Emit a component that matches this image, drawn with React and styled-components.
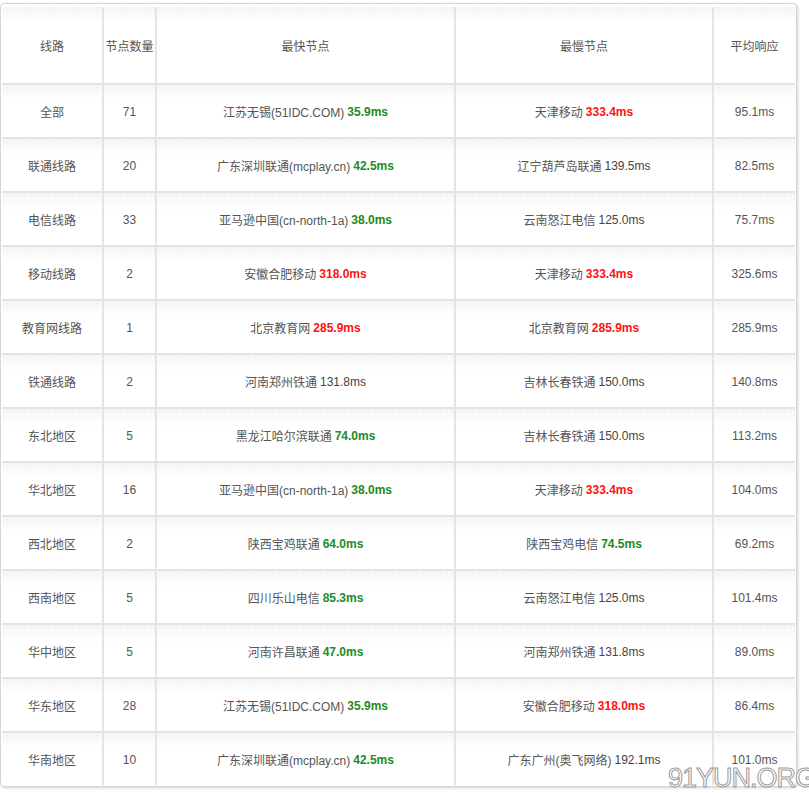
import React from 'react'
import styled, { createGlobalStyle } from 'styled-components'

const GlobalStyle = createGlobalStyle`
  body {
    margin: 0;
    background: #fff;
    font-family: "Liberation Sans", Arial, "Noto Sans CJK SC", sans-serif;
  }
`

const Page = styled.div`
  position: relative;
  width: 809px;
  height: 793px;
  overflow: hidden;
  padding-top: 3px;
  box-sizing: border-box;
`

const Frame = styled.div`
  width: 797px;
  box-sizing: border-box;
  border: 1px solid #d6d6d6;
  border-radius: 4px;
  box-shadow: 1px 1px 3px rgba(0, 0, 0, 0.18);
  padding: 3px 1px 1px 1px;
  background: #fff;
`

const Grid = styled.div`
  display: grid;
  grid-template-columns: 100px 51px 297px 256px 81px;
  grid-template-rows: 76px;
  grid-auto-rows: 52px;
  gap: 2px;
  background: #e4e4e4;
`

const Cell = styled.div`
  display: flex;
  align-items: center;
  justify-content: center;
  padding-top: 1px;
  white-space: nowrap;
  font-size: 12px;
  color: #555;
  background:
    repeating-linear-gradient(90deg, rgba(255,255,255,0.7) 0 1px, transparent 1px 3px) 0 0 / 100% 6px no-repeat,
    linear-gradient(to bottom, #f1f1f1 0, #f8f8f8 6px, #fdfdfd 12px, #fff 18px);
`

const Ms = styled.b`
  margin-left: 3px;
  font-weight: bold;
  color: ${p => (p.$tone === 'red' ? '#ff1111' : '#228b22')};
`

const Plain = styled.span`
  margin-left: 3px;
  color: #444;
`

const Watermark = styled.div`
  position: absolute;
  left: 668px;
  top: 766px;
  font-family: "Liberation Sans", Arial, sans-serif;
  font-size: 27px;
  line-height: 24px;
  letter-spacing: -1px;
  color: #fff;
  -webkit-text-stroke: 1px #9a9a9a;
  white-space: nowrap;
`

const rows = [
  ['全部', '71', ['江苏无锡(51IDC.COM)', '35.9ms', 'green'], ['天津移动', '333.4ms', 'red'], '95.1ms'],
  ['联通线路', '20', ['广东深圳联通(mcplay.cn)', '42.5ms', 'green'], ['辽宁葫芦岛联通', '139.5ms'], '82.5ms'],
  ['电信线路', '33', ['亚马逊中国(cn-north-1a)', '38.0ms', 'green'], ['云南怒江电信', '125.0ms'], '75.7ms'],
  ['移动线路', '2', ['安徽合肥移动', '318.0ms', 'red'], ['天津移动', '333.4ms', 'red'], '325.6ms'],
  ['教育网线路', '1', ['北京教育网', '285.9ms', 'red'], ['北京教育网', '285.9ms', 'red'], '285.9ms'],
  ['铁通线路', '2', ['河南郑州铁通', '131.8ms'], ['吉林长春铁通', '150.0ms'], '140.8ms'],
  ['东北地区', '5', ['黑龙江哈尔滨联通', '74.0ms', 'green'], ['吉林长春铁通', '150.0ms'], '113.2ms'],
  ['华北地区', '16', ['亚马逊中国(cn-north-1a)', '38.0ms', 'green'], ['天津移动', '333.4ms', 'red'], '104.0ms'],
  ['西北地区', '2', ['陕西宝鸡联通', '64.0ms', 'green'], ['陕西宝鸡电信', '74.5ms', 'green'], '69.2ms'],
  ['西南地区', '5', ['四川乐山电信', '85.3ms', 'green'], ['云南怒江电信', '125.0ms'], '101.4ms'],
  ['华中地区', '5', ['河南许昌联通', '47.0ms', 'green'], ['河南郑州铁通', '131.8ms'], '89.0ms'],
  ['华东地区', '28', ['江苏无锡(51IDC.COM)', '35.9ms', 'green'], ['安徽合肥移动', '318.0ms', 'red'], '86.4ms'],
  ['华南地区', '10', ['广东深圳联通(mcplay.cn)', '42.5ms', 'green'], ['广东广州(奥飞网络)', '192.1ms'], '101.0ms'],
]

const Node = ({ data }) => {
  const [name, ms, tone] = data
  return (
    <Cell>
      {name}
      {tone ? <Ms $tone={tone}>{ms}</Ms> : <Plain>{ms}</Plain>}
    </Cell>
  )
}

export default function App() {
  return (
    <Page>
      <GlobalStyle />
      <Frame>
        <Grid>
          <Cell>线路</Cell>
          <Cell>节点数量</Cell>
          <Cell>最快节点</Cell>
          <Cell>最慢节点</Cell>
          <Cell>平均响应</Cell>
          {rows.map(r => (
            <React.Fragment key={r[0]}>
              <Cell>{r[0]}</Cell>
              <Cell>{r[1]}</Cell>
              <Node data={r[2]} />
              <Node data={r[3]} />
              <Cell>{r[4]}</Cell>
            </React.Fragment>
          ))}
        </Grid>
      </Frame>
      <Watermark>91YUN.ORG</Watermark>
    </Page>
  )
}
